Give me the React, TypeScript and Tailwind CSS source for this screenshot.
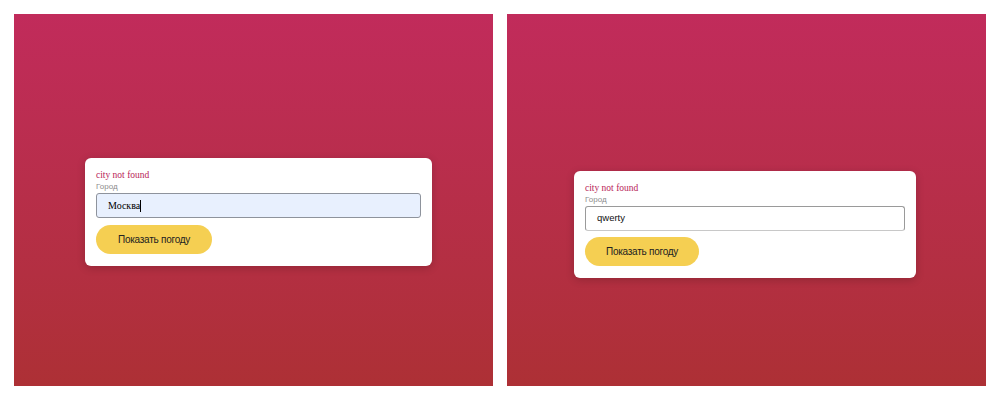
const Card = ({ value, autofill, width }: { value: string; autofill?: boolean; width: string }) => {
    return (
        <div className={`${width} bg-white rounded-[6px] shadow-[0_2px_8px_rgba(0,0,0,0.18)] px-[11px] pt-[11px] pb-[12px]`}>
            <div className="text-[9.5px] leading-[12px] text-[#b81d58]" style={{ fontFamily: '"Liberation Serif", serif' }}>
                city not found
            </div>
            <div className="text-[8px] leading-[11px] text-[#8c8c8c] mb-px" style={{ fontFamily: '"Liberation Sans", Arial, sans-serif' }}>
                Город
            </div>
            {autofill ? (
                <div className="h-[25px] flex items-center pl-[11px] bg-[#e8f0fe] border border-[#8e939c] rounded-[3px]">
                    <span className="text-[10px] text-black" style={{ fontFamily: '"Liberation Serif", serif' }}>
                        {value}
                    </span>
                    <span className="w-px h-[12px] bg-black" />
                </div>
            ) : (
                <div className="h-[25px] flex items-center pl-[11px] bg-white border border-[#9a9a9a] border-b-[#c8c8c8] rounded-[3px]">
                    <span className="text-[9.5px] text-[#111]" style={{ fontFamily: '"Liberation Sans", Arial, sans-serif' }}>
                        {value}
                    </span>
                </div>
            )}
            <button
                className={`${autofill ? "mt-[7px] w-[116px]" : "mt-[6px] w-[114px]"} h-[29px] rounded-full bg-[#f5cf52] text-[10px] tracking-[-0.25px] text-[#222] flex items-center justify-center`}
                style={{ fontFamily: '"Liberation Sans", Arial, sans-serif' }}
            >
                Показать погоду
            </button>
        </div>
    );
};

export default function App() {
    return (
        <div className="w-[1000px] h-[400px] bg-white flex gap-[14px] p-[14px]">
            <div className="w-[479px] h-[372px] bg-gradient-to-b from-[#c12b5b] to-[#ad3035] pl-[71px] pt-[144px]">
                <Card value="Москва" autofill width="w-[347px]" />
            </div>
            <div className="w-[479px] h-[372px] bg-gradient-to-b from-[#c12b5b] to-[#ad3035] pl-[67px] pt-[157px]">
                <Card value="qwerty" width="w-[342px]" />
            </div>
        </div>
    );
}
